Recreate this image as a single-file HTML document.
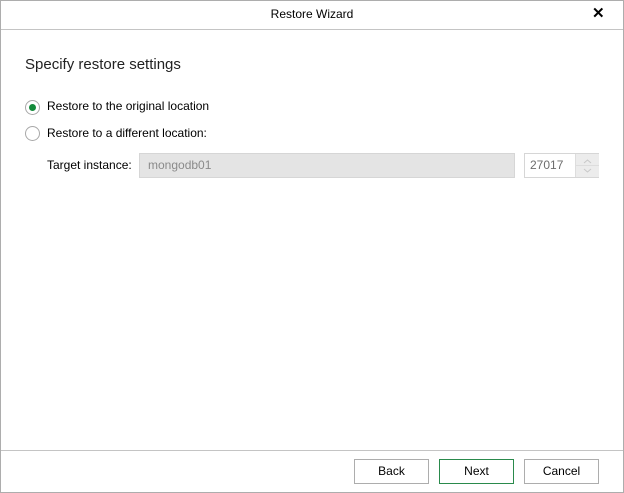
<!DOCTYPE html>
<html><head><style>
body{margin:0;width:624px;height:493px;position:relative;font-family:"Segoe UI","Liberation Sans",sans-serif;font-size:12px;color:#000;background:#fff;overflow:hidden}
.frame{position:absolute;left:0;top:0;width:622px;height:491px;border:1px solid #adadad}
.abs{position:absolute}
.title{left:0;top:0;width:624px;height:29px;line-height:29px;text-align:center;font-size:12px}
.sep{left:1px;width:622px;height:1px;background:#c4c4c4}
.radio{width:13px;height:13px;border:1px solid #a8a8a8;border-radius:50%;background:#fff}
.dot{position:absolute;left:3px;top:3px;width:7px;height:7px;border-radius:50%;background:#138a3a}
.btn{top:459px;width:73px;height:23px;border:1px solid #adadad;text-align:center;line-height:23px;background:#fff}
</style></head><body>
<div class="frame"></div>
<div class="abs title">Restore Wizard</div>
<div class="abs" style="left:592px;top:5px;font-size:15px;font-weight:bold;line-height:18px">✕</div>
<div class="abs sep" style="top:29px"></div>
<div class="abs" style="left:25px;top:56px;font-size:15px;color:#222">Specify restore settings</div>
<div class="abs radio" style="left:25px;top:100px"><div class="dot"></div></div>
<div class="abs" style="left:47px;top:99px">Restore to the original location</div>
<div class="abs radio" style="left:25px;top:126px"></div>
<div class="abs" style="left:47px;top:126px">Restore to a different location:</div>
<div class="abs" style="left:47px;top:158px">Target instance:</div>
<div class="abs" style="left:139px;top:153px;border:1px solid #d6d6d6;background:#e4e4e4;color:#8a8a8a;line-height:23px;box-sizing:border-box;width:376px;height:25px;padding-left:8px">mongodb01</div>
<div class="abs" style="left:524px;top:153px;width:75px;height:25px;box-sizing:border-box;border:1px solid #d6d6d6;background:#fff;color:#6d6d6d;line-height:23px;padding-left:5px">27017</div>
<div class="abs" style="left:575px;top:154px;width:23px;height:23px;background:#ececec;border-left:1px solid #ddd"><svg width="23" height="23"><path d="M8 9l3.5-3 3.5 3M8 15l3.5 3 3.5-3" fill="none" stroke="#c8c8c8"/><line x1="0" y1="11.5" x2="23" y2="11.5" stroke="#ddd"/></svg></div>
<div class="abs sep" style="top:450px"></div>
<div class="abs btn" style="left:354px">Back</div>
<div class="abs btn" style="left:439px;border-color:#2a8a4c">Next</div>
<div class="abs btn" style="left:524px">Cancel</div>
</body></html>
